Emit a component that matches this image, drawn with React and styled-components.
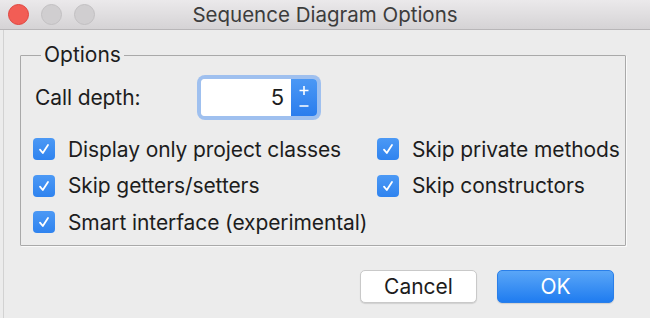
import React from 'react';
import styled, { createGlobalStyle } from 'styled-components';

const GlobalStyle = createGlobalStyle`
  html, body {
    margin: 0;
    padding: 0;
    background: #ececec;
  }
  body {
    font-family: Inter, "Liberation Sans", Arial, sans-serif;
    color: #1d1d1d;
  }
`;

const Window = styled.div`
  width: 650px;
  height: 318px;
  display: flex;
  flex-direction: column;
  background: #ececec;
  overflow: hidden;
`;

const TitleBar = styled.div`
  height: 29px;
  flex: none;
  display: flex;
  align-items: center;
  position: relative;
  background: linear-gradient(#ebe9eb, #d5d3d5);
  border-bottom: 1px solid #b8b6b8;
`;

const Lights = styled.div`
  display: flex;
  gap: 12px;
  padding-left: 8px;
`;

const Light = styled.span`
  width: 21px;
  height: 21px;
  border-radius: 50%;
  background: ${p => (p.red ? '#f25d55' : '#d0ced0')};
  border: 1px solid ${p => (p.red ? '#e0443e' : '#c2c0c2')};
  box-sizing: border-box;
`;

const Title = styled.div`
  position: absolute;
  left: 0;
  right: 0;
  text-align: center;
  font-size: 20.5px;
  color: #3c3c3c;
  pointer-events: none;
`;

const Body = styled.div`
  flex: 1;
  display: flex;
  flex-direction: column;
  margin-left: 3px;
  border-left: 1px solid #d2d2d2;
  padding: 16px 0 0 16px;
`;

const Group = styled.fieldset`
  width: 606px;
  box-sizing: border-box;
  margin: 0;
  padding: 4px 0 4px 12px;
  border: 1px solid #a9a9a9;
  border-radius: 1px;
  box-shadow: 1px 1px 0 #fafafa;
  min-width: 0;
`;

const Legend = styled.legend`
  margin-left: 8px;
  padding: 0 3px;
  font-size: 21px;
  line-height: 18px;
`;

const DepthRow = styled.div`
  display: flex;
  align-items: center;
  height: 43px;
  margin-top: 8px;
  margin-bottom: 12px;
`;

const Label = styled.span`
  font-size: 21px;
  letter-spacing: -0.1px;
  width: ${p => p.width || 'auto'};
  padding-left: ${p => p.indent || '0'};
  box-sizing: border-box;
`;

const Spinner = styled.div`
  display: flex;
  width: 116px;
  height: 37px;
  border-radius: 4px;
  box-shadow: 0 0 0 4px #9fc0ef;
  overflow: hidden;
`;

const Field = styled.div`
  flex: 1;
  background: #fff;
  font-size: 22px;
  text-align: right;
  padding-right: 7px;
  line-height: 37px;
`;

const Stepper = styled.div`
  width: 26px;
  background: linear-gradient(#4b98f5, #2b7ded);
  display: flex;
  align-items: center;
  justify-content: center;
`;

const Options = styled.div`
  display: grid;
  grid-template-columns: 344px 1fr;
  grid-auto-rows: 36.5px;
`;

const Option = styled.label`
  display: flex;
  align-items: center;
  gap: 13px;
  font-size: 21px;
  letter-spacing: -0.1px;
  white-space: nowrap;
`;

const Box = styled.span`
  width: 22px;
  height: 22px;
  flex: none;
  border-radius: 4px;
  background: linear-gradient(#4c99f5, #2f83ef);
  display: flex;
  align-items: center;
  justify-content: center;
`;

const Buttons = styled.div`
  display: flex;
  justify-content: flex-end;
  gap: 20px;
  padding-right: 36px;
  margin-top: 24px;
`;

const Button = styled.button`
  width: 117px;
  height: 33px;
  border-radius: 5px;
  font-family: inherit;
  font-size: 21px;
  padding: 0;
  border: 1px solid ${p => (p.primary ? '#2a7fe9' : '#c9c9c9')};
  background: ${p => (p.primary ? 'linear-gradient(#5aa6f7, #1f7cf0)' : '#ffffff')};
  color: ${p => (p.primary ? '#ffffff' : '#1d1d1d')};
  box-shadow: 0 1px 1px rgba(0, 0, 0, 0.12);
`;

const Check = () => (
  <svg width="14" height="14" viewBox="0 0 14 14">
    <path d="M3 7.6 L5.8 11 L11 3" fill="none" stroke="#fff" strokeWidth="1.8" strokeLinecap="round" strokeLinejoin="round" />
  </svg>
);

const PlusMinus = () => (
  <svg width="12" height="28" viewBox="0 0 12 28">
    <path d="M6 2 V11 M1.5 6.5 H10.5 M1.5 22 H10.5" fill="none" stroke="#fff" strokeWidth="1.6" />
  </svg>
);

const options = [
  'Display only project classes',
  'Skip private methods',
  'Skip getters/setters',
  'Skip constructors',
  'Smart interface (experimental)',
];

export default function App() {
  return (
    <Window>
      <GlobalStyle />
      <TitleBar>
        <Lights>
          <Light red />
          <Light />
          <Light />
        </Lights>
        <Title>Sequence Diagram Options</Title>
      </TitleBar>
      <Body>
        <Group>
          <Legend>Options</Legend>
          <DepthRow>
            <Label width="168px" indent="2px">Call depth:</Label>
            <Spinner>
              <Field>5</Field>
              <Stepper>
                <PlusMinus />
              </Stepper>
            </Spinner>
          </DepthRow>
          <Options>
            {options.map(text => (
              <Option key={text}>
                <Box><Check /></Box>
                {text}
              </Option>
            ))}
          </Options>
        </Group>
        <Buttons>
          <Button>Cancel</Button>
          <Button primary>OK</Button>
        </Buttons>
      </Body>
    </Window>
  );
}
